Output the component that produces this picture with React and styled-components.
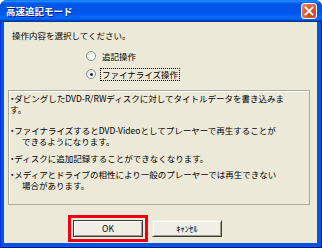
import styled, { createGlobalStyle } from "styled-components";

const GlobalStyle = createGlobalStyle`
  html, body {
    margin: 0;
    padding: 0;
    background: #ffffff;
  }
  body {
    font-family: "Noto Sans CJK JP", "Noto Sans", sans-serif;
  }
`;

const Window = styled.div`
  width: 322px;
  height: 248px;
  display: flex;
  flex-direction: column;
  background: #0055e5;
  border-radius: 7px 7px 0 0;
  overflow: hidden;
  box-shadow: inset 1px 0 0 #0831d9, inset -1px -1px 0 #00138c;
`;

const TitleBar = styled.div`
  height: 22px;
  flex: none;
  display: flex;
  align-items: center;
  justify-content: space-between;
  padding: 0 5px 0 6px;
  background: linear-gradient(
    to bottom,
    #0058ee 0%,
    #3593ff 4%,
    #288eff 6%,
    #127dff 8%,
    #036ffc 10%,
    #0262ee 14%,
    #0057e5 20%,
    #0054e3 24%,
    #0055eb 56%,
    #005bf5 66%,
    #026afe 76%,
    #0062ef 86%,
    #0052d6 92%,
    #0040ab 94%,
    #003092 100%
  );
`;

const Title = styled.span`
  color: #ffffff;
  font-size: 9.5px;
  font-weight: bold;
  line-height: 12px;
  text-shadow: 1px 1px 0 #0a1883;
  white-space: nowrap;
`;

const CloseButton = styled.div`
  width: 14px;
  height: 14px;
  border: 1px solid #ffffff;
  border-radius: 3px;
  background: radial-gradient(circle at 70% 70%, #c4401f 0%, #d85a36 45%, #ec8f70 100%);
  display: flex;
  align-items: center;
  justify-content: center;
`;

const Body = styled.div`
  flex: 1;
  margin: 0 5px 5px 4px;
  background: #ece9d8;
  padding-top: 8px;
  display: flex;
  flex-direction: column;
  font-size: 8.5px;
  color: #000000;
`;

const Prompt = styled.div`
  margin-left: 8px;
  line-height: 11px;
  white-space: nowrap;
`;

const RadioList = styled.div`
  margin: 8px 0 0 82px;
  display: flex;
  flex-direction: column;
  gap: 4px;
`;

const RadioRow = styled.div`
  height: 14px;
  display: flex;
  align-items: center;
  gap: 4px;
`;

const RadioCircle = styled.span`
  width: 8px;
  height: 8px;
  border: 1px solid #8b8f99;
  border-radius: 50%;
  background: linear-gradient(135deg, #dcdad2 0%, #ffffff 80%);
  display: flex;
  align-items: center;
  justify-content: center;
  &::after {
    content: "";
    width: 3px;
    height: 3px;
    border-radius: 50%;
    background: ${(p) => (p.checked ? "#2b2b2b" : "transparent")};
  }
`;

const RadioLabel = styled.span`
  line-height: 11px;
  padding: 0 1px;
  white-space: nowrap;
  border: 1px dotted ${(p) => (p.focused ? "#000000" : "transparent")};
`;

const Panel = styled.div`
  margin: 9px 7px 0 4px;
  height: 115px;
  box-sizing: border-box;
  border: 1px solid #aca899;
  box-shadow: inset 1px 1px 0 #ffffff;
  padding: 2px 0 0 1px;
`;

const Para = styled.div`
  margin-top: ${(p) => p.gap || 0}px;
`;

const Line = styled.div`
  line-height: 11px;
  white-space: nowrap;
  padding-left: ${(p) => (p.indent ? 12 : 0)}px;
`;

const Bullet = styled.span`
  font-feature-settings: "palt";
`;

const ButtonRow = styled.div`
  margin: 10px 0 0 64px;
  display: flex;
  align-items: center;
  gap: 4px;
`;

const Highlight = styled.div`
  border: 3px solid #f00010;
  padding: 2px;
  display: flex;
`;

const Button = styled.div`
  width: 70px;
  height: 17px;
  box-sizing: border-box;
  display: flex;
  align-items: center;
  justify-content: center;
  background: #f1efe5;
  font-size: 8.5px;
  line-height: 11px;
  white-space: nowrap;
  border: 1px solid ${(p) => (p.primary ? "#3c3c3c" : "transparent")};
  border-right-color: #3c3c3c;
  border-bottom-color: #3c3c3c;
  box-shadow: inset 1px 1px 0 #ffffff, inset -1px -1px 0 #9d9b90;
`;

const notes = [
  { gap: 0, lines: ["ダビングしたDVD-R/RWディスクに対してタイトルデータを書き込みま", "す。"], indentRest: false },
  { gap: 10, lines: ["ファイナライズするとDVD-Videoとしてプレーヤーで再生することが", "できるようになります。"], indentRest: true },
  { gap: 6, lines: ["ディスクに追加記録することができなくなります。"], indentRest: true },
  { gap: 5, lines: ["メディアとドライブの相性により一般のプレーヤーでは再生できない", "場合があります。"], indentRest: true },
];

const App = () => {
  return (
    <>
      <GlobalStyle />
      <Window>
        <TitleBar>
          <Title>高速追記モード</Title>
          <CloseButton>
            <svg width="10" height="10" viewBox="0 0 10 10">
              <path d="M1.5 1.5 L8.5 8.5 M8.5 1.5 L1.5 8.5" stroke="#ffffff" strokeWidth="1.8" strokeLinecap="square" />
            </svg>
          </CloseButton>
        </TitleBar>
        <Body>
          <Prompt>操作内容を選択してください。</Prompt>
          <RadioList>
            <RadioRow>
              <RadioCircle />
              <RadioLabel>追記操作</RadioLabel>
            </RadioRow>
            <RadioRow>
              <RadioCircle checked />
              <RadioLabel focused>ファイナライズ操作</RadioLabel>
            </RadioRow>
          </RadioList>
          <Panel>
            {notes.map((n, i) => (
              <Para key={i} gap={n.gap}>
                {n.lines.map((l, j) => (
                  <Line key={j} indent={j > 0 && n.indentRest}>
                    {j === 0 && <Bullet>・</Bullet>}
                    {l}
                  </Line>
                ))}
              </Para>
            ))}
          </Panel>
          <ButtonRow>
            <Highlight>
              <Button primary>OK</Button>
            </Highlight>
            <Button>ｷｬﾝｾﾙ</Button>
          </ButtonRow>
        </Body>
      </Window>
    </>
  );
};

export default App;
